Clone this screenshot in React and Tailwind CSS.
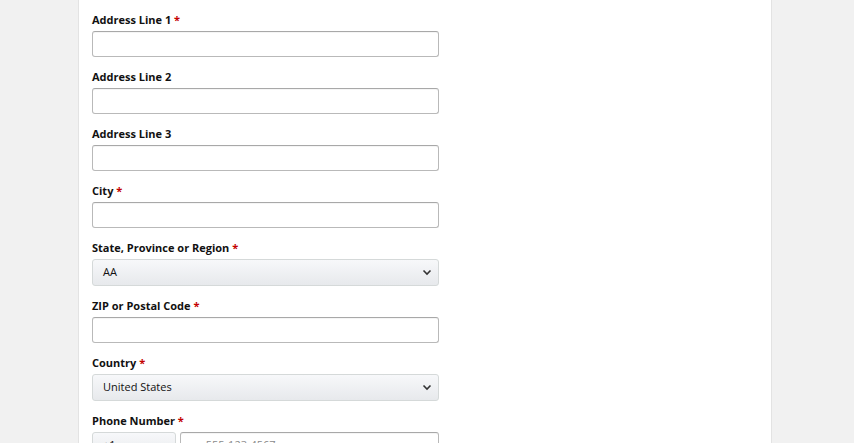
import React from 'react';

const fields = [
  { label: 'Address Line 1', required: true, type: 'input' },
  { label: 'Address Line 2', type: 'input' },
  { label: 'Address Line 3', type: 'input' },
  { label: 'City', required: true, type: 'input' },
  { label: 'State, Province or Region', required: true, type: 'select', value: 'AA' },
  { label: 'ZIP or Postal Code', required: true, type: 'input' },
  { label: 'Country', required: true, type: 'select', value: 'United States' },
];

function Chevron() {
  return (
    <svg width="10" height="7" viewBox="0 0 10 7" className="shrink-0">
      <path d="M1.5 1.5 L5 5 L8.5 1.5" fill="none" stroke="#333" strokeWidth="1.6" />
    </svg>
  );
}

function Label({ text, required }) {
  return (
    <div className="text-[11px] leading-[16px] font-bold text-[#111] mb-[3px]">
      {text}
      {required && <span className="text-[#c40000]"> *</span>}
    </div>
  );
}

function TextInput({ placeholder, className = '' }) {
  return (
    <div
      className={`h-[26px] border border-[#b9b9b9] border-t-[#a8a8a8] rounded-[3px] bg-white shadow-[inset_0_1px_0_rgba(0,0,0,0.04)] flex items-center px-[7px] text-[11px] text-[#8a8a8a] ${className}`}
    >
      {placeholder}
    </div>
  );
}

function Select({ value, className = '' }) {
  return (
    <div
      className={`h-[27px] border border-[#d5d9d9] rounded-[3px] bg-gradient-to-b from-[#f7f8fa] to-[#e7e9ec] flex items-center justify-between pl-[10px] pr-[6px] text-[11px] text-[#111] ${className}`}
    >
      <span>{value}</span>
      <Chevron />
    </div>
  );
}

export default function App() {
  return (
    <div className="h-[443px] overflow-hidden bg-[#f1f1f1]" style={{ fontFamily: '"Open Sans", "Noto Sans", sans-serif' }}>
      <div className="ml-[78px] w-[694px] min-h-[600px] bg-white border-x border-[#e3e3e3] pl-[13px] pt-[12px]">
        {fields.map(({ label, required, type, value }) => (
          <div key={label} className="w-[347px] mb-[12px]">
            <Label text={label} required={required} />
            {type === 'input' ? <TextInput /> : <Select value={value} />}
          </div>
        ))}
        <div className="w-[347px]">
          <Label text="Phone Number" required />
          <div className="flex gap-[4px]">
            <Select value="+1" className="w-[84px]" />
            <TextInput placeholder="ex: 555-123-4567" className="flex-1" />
          </div>
        </div>
      </div>
    </div>
  );
}
